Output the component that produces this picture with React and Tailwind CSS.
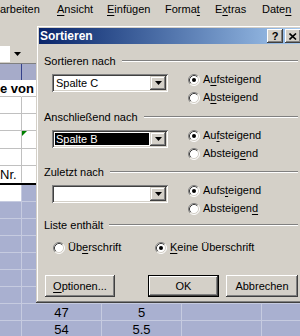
import React from "react";

const U = ({ children }) => (
  <span className="underline decoration-1 underline-offset-[2px]">{children}</span>
);

const Radio = ({ checked }) => (
  <svg width="12" height="12" viewBox="0 0 12 12" className="shrink-0">
    <circle cx="6" cy="6" r="5" fill="#ffffff" />
    <path d="M2.11 9.89 A5.5 5.5 0 0 1 9.89 2.11" fill="none" stroke="#808080" strokeWidth="1" />
    <path d="M9.89 2.11 A5.5 5.5 0 0 1 2.11 9.89" fill="none" stroke="#ffffff" strokeWidth="1" />
    <path d="M2.82 9.18 A4.5 4.5 0 0 1 9.18 2.82" fill="none" stroke="#404040" strokeWidth="1" />
    <path d="M9.18 2.82 A4.5 4.5 0 0 1 2.82 9.18" fill="none" stroke="#d4d0c8" strokeWidth="1" />
    {checked && <circle cx="6" cy="6" r="2" fill="#000000" />}
  </svg>
);

const RadioRow = ({ checked, children }) => (
  <div className="flex items-center h-[13px] gap-[3px]">
    <Radio checked={checked} />
    <span className="leading-[13px] whitespace-nowrap">{children}</span>
  </div>
);

const Arrow = () => (
  <svg width="7" height="4" viewBox="0 0 7 4">
    <path d="M0 0 H7 L3.5 4 Z" fill="#000" />
  </svg>
);

const Combo = ({ value, selected }) => (
  <div className="ml-[8px] mt-[1px] w-[116px] h-[18px] bg-white shadow-[inset_1px_1px_#808080,inset_-1px_-1px_#ffffff,inset_2px_2px_#404040,inset_-2px_-2px_#d4d0c8] p-[2px] flex">
    <div className="flex-1 flex items-center p-[1px]">
      {value && (
        <span
          className={
            "h-full w-full flex items-center pl-[1px] leading-[12px] " +
            (selected ? "bg-black text-white" : "text-black")
          }
        >
          {value}
        </span>
      )}
    </div>
    <div className="w-[16px] h-[14px] bg-[#d4d0c8] shadow-[inset_-1px_-1px_#404040,inset_1px_1px_#d4d0c8,inset_-2px_-2px_#808080,inset_2px_2px_#ffffff] flex items-center justify-center">
      <Arrow />
    </div>
  </div>
);

const Header = ({ children }) => (
  <div className="h-[12px] flex items-center">
    <span className="leading-[12px] whitespace-nowrap">{children}</span>
    <div className="flex-1 ml-[6px] h-[2px] border-t border-t-[#808080] border-b border-b-white" />
  </div>
);

const Group = ({ title, value, selected, h, r1, r2 }) => (
  <div className={"flex flex-col " + h}>
    <Header>{title}</Header>
    <div className="flex mt-[6px]">
      <Combo value={value} selected={selected} />
      <div className="ml-[20px] flex flex-col gap-[5px]">
        <RadioRow checked>{r1}</RadioRow>
        <RadioRow>{r2}</RadioRow>
      </div>
    </div>
  </div>
);

const raised =
  "shadow-[inset_-1px_-1px_#404040,inset_1px_1px_#ffffff,inset_-2px_-2px_#808080,inset_2px_2px_#d4d0c8]";

const Btn = ({ children, className = "" }) => (
  <div className={"h-[22px] bg-[#d4d0c8] flex items-center justify-center " + raised + " " + className}>
    {children}
  </div>
);

const Dialog = () => (
  <div className="absolute z-20 left-[36px] top-[25px] w-[270px] h-[278px] bg-[#d4d0c8] p-[3px] flex flex-col shadow-[inset_-1px_-1px_#404040,inset_1px_1px_#d4d0c8,inset_-2px_-2px_#808080,inset_2px_2px_#ffffff]">
    <div className="h-[16px] bg-linear-to-r from-[#0a246a] to-[#a6caf0] flex items-center pl-[1px] pr-[2px]">
      <span className="text-white font-bold text-[12px] leading-[14px]">Sortieren</span>
      <div className="ml-auto flex gap-[2px]">
        <div className={"w-[16px] h-[14px] bg-[#d4d0c8] flex items-center justify-center " + raised}>
          <span className="font-bold text-[11px] leading-[11px] text-black">?</span>
        </div>
        <div className={"w-[16px] h-[14px] bg-[#d4d0c8] flex items-center justify-center " + raised}>
          <svg width="8" height="7" viewBox="0 0 8 7">
            <path d="M0.5 0.5 L7 6.5 M7 0.5 L0.5 6.5" stroke="#000" strokeWidth="1.6" />
          </svg>
        </div>
      </div>
    </div>
    <div className="flex-1 flex flex-col px-[5px] pt-[11px] text-[11px] text-black">
      <Group
        h="h-[56px]"
        title="Sortieren nach"
        value="Spalte C"
        r1={<>A<U>u</U>fsteigend</>}
        r2={<>A<U>b</U>steigend</>}
      />
      <Group
        h="h-[55px]"
        title="Anschließend nach"
        value="Spalte B"
        selected
        r1={<>Au<U>f</U>steigend</>}
        r2={<>Absteig<U>e</U>nd</>}
      />
      <Group
        h="h-[53px]"
        title="Zuletzt nach"
        value=""
        r1={<>Aufs<U>t</U>eigend</>}
        r2={<>Absteigen<U>d</U></>}
      />
      <div className="flex flex-col">
        <Header>Liste enthält</Header>
        <div className="flex mt-[10px]">
          <div className="ml-[9px] w-[102px]">
            <RadioRow>Üb<U>e</U>rschrift</RadioRow>
          </div>
          <RadioRow checked>
            <U>K</U>eine Überschrift
          </RadioRow>
        </div>
      </div>
      <div className="flex mt-[21px]">
        <Btn className="ml-[1px] w-[70px]">
          <span><U>O</U>ptionen...</span>
        </Btn>
        <div className="ml-[33px] w-[71px] h-[22px] border border-black">
          <Btn className="h-full w-full">OK</Btn>
        </div>
        <Btn className="ml-[7px] w-[72px]">Abbrechen</Btn>
      </div>
    </div>
  </div>
);

const COLS = [22, 80, 80, 80, 80, 40];

const Row = ({ h, bg, line, cells = {}, first }) => (
  <div className={"flex " + h}>
    {COLS.map((w, i) => {
      const cellBg = first !== undefined && i === 0 ? first : bg;
      return (
        <div
          key={i}
          style={{ width: w }}
          className={"shrink-0 border-r border-b relative " + line + " " + cellBg}
        >
          {cells[i]}
        </div>
      );
    })}
  </div>
);

export default function App() {
  const white = "bg-white";
  const wline = "border-[#c0c0c0]";
  const blue = "bg-[#a9b0d0]";
  const bline = "border-[#c6cbe0]";
  return (
    <div
      className="relative w-[300px] h-[336px] overflow-hidden bg-[#d4d0c8]"
      style={{ fontFamily: '"Liberation Sans", Arial, sans-serif' }}
    >
      {/* menu bar */}
      <div className="h-[19px] flex items-center text-[11px] text-black whitespace-nowrap">
        <span className="w-[57px] shrink-0">arbeiten</span>
        <span className="w-[50px] shrink-0"><U>A</U>nsicht</span>
        <span className="w-[58px] shrink-0"><U>E</U>infügen</span>
        <span className="w-[50px] shrink-0">Forma<U>t</U></span>
        <span className="w-[47px] shrink-0">E<U>x</U>tras</span>
        <span className="shrink-0">Date<U>n</U></span>
      </div>
      {/* toolbar */}
      <div className="h-[44px] flex flex-col justify-end">
        <div className="flex items-center h-[16px] mb-[1px]">
          <div className="w-[10px] h-full bg-white" />
          <div className="ml-[4px]">
            <Arrow />
          </div>
        </div>
      </div>
      {/* column header band */}
      <div className="h-[17px] flex border-t border-[#808080]">
        <div className="w-[22px] h-full bg-[#a6abc9] border-r border-[#34418a]" />
        <div className="flex-1 h-full bg-[#a6abc9]" />
      </div>
      {/* rows */}
      <div className="text-[13px] leading-[17px] text-black">
        <Row
          h="h-[17px]"
          bg={white}
          line="border-r-transparent border-b-[#c0c0c0]"
          cells={{
            0: (
              <span className="absolute z-10 left-0 top-0 font-bold whitespace-nowrap">
                e von
              </span>
            ),
          }}
        />
        <Row h="h-[17px]" bg={white} line={wline} />
        <Row h="h-[17px]" bg={white} line={wline} />
        <Row
          h="h-[18px]"
          bg={white}
          line={wline}
          cells={{
            1: (
              <svg width="5" height="5" className="absolute left-0 top-0">
                <path d="M0 0 H5 L0 5 Z" fill="#008000" />
              </svg>
            ),
          }}
        />
        <Row h="h-[17px]" bg={white} line={wline} />
        <Row
          h="h-[17px]"
          bg={white}
          line="border-r-[#c0c0c0] border-b-transparent"
          cells={{
            0: <span className="absolute left-0 top-0 whitespace-nowrap">Nr.</span>,
          }}
        />
        <div className="h-[2px] bg-black" />
        <Row h="h-[17px]" bg={blue} first={white} line={bline} />
        {[0, 1, 2, 3, 4, 5].map((k) => (
          <Row key={k} h="h-[17px]" bg={blue} line={bline} />
        ))}
        <Row
          h="h-[17px]"
          bg={blue}
          line={bline}
          cells={{
            1: <span className="absolute inset-0 text-center">47</span>,
            2: <span className="absolute inset-0 text-center">5</span>,
          }}
        />
        <Row
          h="h-[17px]"
          bg={blue}
          line={bline}
          cells={{
            1: <span className="absolute inset-0 text-center">54</span>,
            2: <span className="absolute inset-0 text-center">5.5</span>,
          }}
        />
      </div>
      <Dialog />
    </div>
  );
}
